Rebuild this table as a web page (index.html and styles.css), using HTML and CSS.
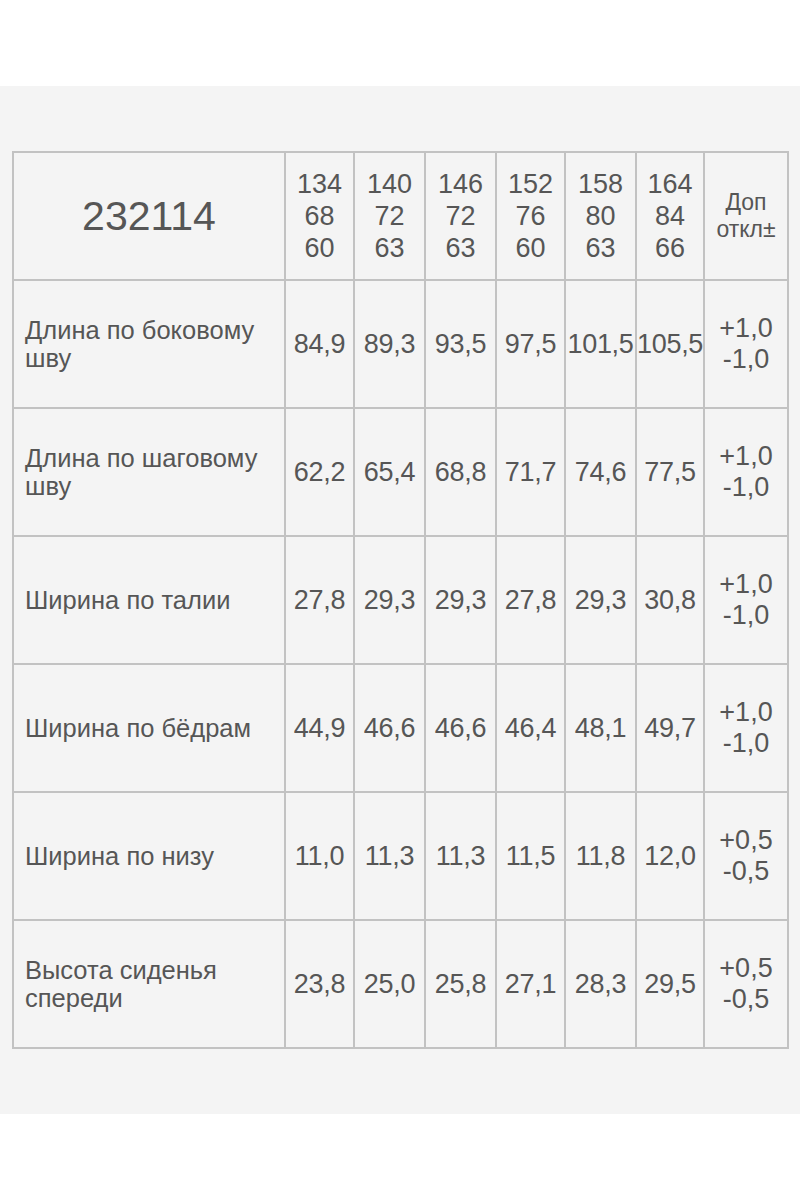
FILE: index.html
```html
<!DOCTYPE html>
<html lang="ru">
<head>
<meta charset="utf-8">
<title>232114</title>
<link rel="stylesheet" href="styles.css">
</head>
<body>
<div class="sheet">
  <table class="sizes">
    <colgroup>
      <col class="c-label">
      <col class="c-69">
      <col class="c-71">
      <col class="c-71">
      <col class="c-69">
      <col class="c-71">
      <col class="c-68">
      <col class="c-tol">
    </colgroup>
    <tr class="head">
      <td class="model">232114</td>
      <td class="size">134<br>68<br>60</td>
      <td class="size">140<br>72<br>63</td>
      <td class="size">146<br>72<br>63</td>
      <td class="size">152<br>76<br>60</td>
      <td class="size">158<br>80<br>63</td>
      <td class="size">164<br>84<br>66</td>
      <td class="tolhead">Доп<br>откл±</td>
    </tr>
    <tr>
      <td class="label">Длина по боковому<br>шву</td>
      <td class="num">84,9</td><td class="num">89,3</td><td class="num">93,5</td><td class="num">97,5</td><td class="num">101,5</td><td class="num">105,5</td>
      <td class="tol">+1,0<br>-1,0</td>
    </tr>
    <tr>
      <td class="label">Длина по шаговому<br>шву</td>
      <td class="num">62,2</td><td class="num">65,4</td><td class="num">68,8</td><td class="num">71,7</td><td class="num">74,6</td><td class="num">77,5</td>
      <td class="tol">+1,0<br>-1,0</td>
    </tr>
    <tr>
      <td class="label">Ширина по талии</td>
      <td class="num">27,8</td><td class="num">29,3</td><td class="num">29,3</td><td class="num">27,8</td><td class="num">29,3</td><td class="num">30,8</td>
      <td class="tol">+1,0<br>-1,0</td>
    </tr>
    <tr>
      <td class="label">Ширина по бёдрам</td>
      <td class="num">44,9</td><td class="num">46,6</td><td class="num">46,6</td><td class="num">46,4</td><td class="num">48,1</td><td class="num">49,7</td>
      <td class="tol">+1,0<br>-1,0</td>
    </tr>
    <tr>
      <td class="label">Ширина по низу</td>
      <td class="num">11,0</td><td class="num">11,3</td><td class="num">11,3</td><td class="num">11,5</td><td class="num">11,8</td><td class="num">12,0</td>
      <td class="tol">+0,5<br>-0,5</td>
    </tr>
    <tr>
      <td class="label">Высота сиденья<br>спереди</td>
      <td class="num">23,8</td><td class="num">25,0</td><td class="num">25,8</td><td class="num">27,1</td><td class="num">28,3</td><td class="num">29,5</td>
      <td class="tol">+0,5<br>-0,5</td>
    </tr>
  </table>
</div>
</body>
</html>
```

FILE: styles.css
```css
html, body {
  margin: 0;
  padding: 0;
  background: #ffffff;
}

body {
  font-family: "Liberation Sans", Arial, sans-serif;
  color: #565656;
}

.sheet {
  margin-top: 86px;
  background: #f4f4f4;
  padding: 65px 12px 65px 12px;
}

.sizes {
  border-collapse: collapse;
  table-layout: fixed;
  width: 776px;
}

.c-label { width: 272px; }
.c-69 { width: 69px; }
.c-71 { width: 71px; }
.c-68 { width: 68px; }
.c-tol { width: 84px; }

.sizes td {
  border: 2px solid #c2c2c2;
  height: 126px;
  padding: 0;
  text-align: center;
  vertical-align: middle;
  white-space: nowrap;
}

.model {
  font-size: 41px;
}

.size {
  font-size: 27px;
  line-height: 32px;
}

.tolhead {
  font-size: 23px;
  line-height: 27px;
}

.label {
  font-size: 25.5px;
  line-height: 28px;
  text-align: left !important;
  padding-left: 11px !important;
}

.num {
  font-size: 27px;
  letter-spacing: -0.3px;
}

.tol {
  font-size: 27px;
  line-height: 31px;
}
```
